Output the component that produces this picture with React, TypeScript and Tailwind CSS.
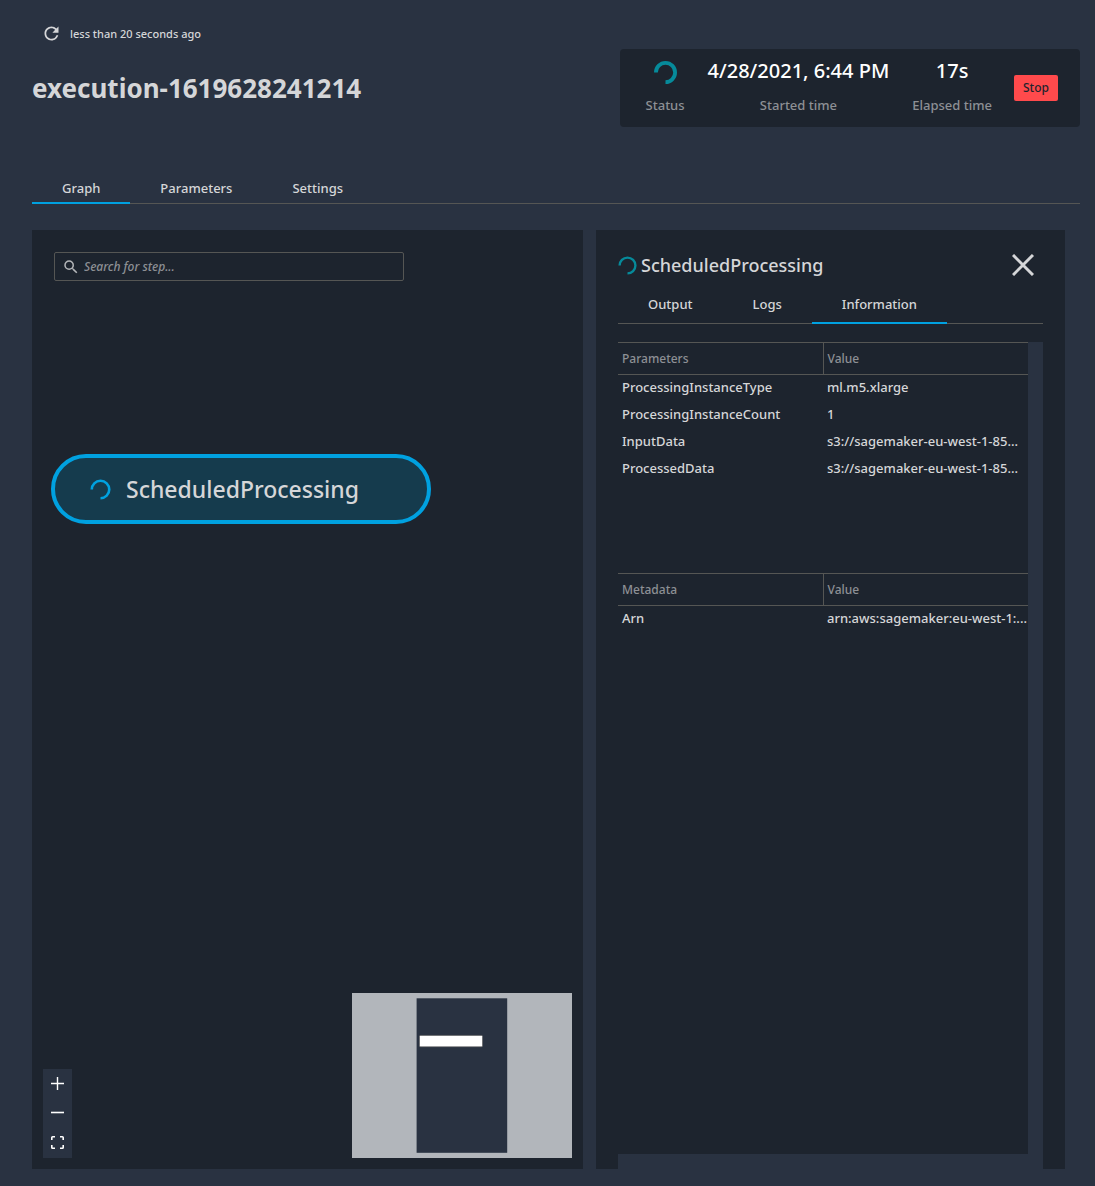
import { useState } from "react";
import { MdRefresh, MdSearch } from "react-icons/md";

function Spinner({ className, width }: { className: string; width: number }) {
  return (
    <svg viewBox="0 0 24 24" fill="none" stroke="currentColor" strokeWidth={width} className={className} aria-hidden="true">
      <path d="M2 12a10 10 0 1 1 10 10" />
    </svg>
  );
}

function Tabs({ items, initial, label, className }: { items: string[]; initial: string; label: string; className: string }) {
  const [active, setActive] = useState(initial);
  return (
    <div role="tablist" aria-label={label} className={"flex border-b border-[#555654] " + className}>
      {items.map((item) => (
        <button
          key={item}
          role="tab"
          aria-selected={item === active}
          onClick={() => setActive(item)}
          className={
            "-mb-px border-b-2 px-[30px] text-[13px] font-medium leading-5 " +
            (item === active ? "border-[#00a1e0]" : "border-transparent")
          }
        >
          {item}
        </button>
      ))}
    </div>
  );
}

function DataTable({ name, rows, className }: { name: string; rows: [string, string][]; className: string }) {
  return (
    <div className={className}>
      <table className="w-full table-fixed border-collapse text-left text-[13px] leading-5">
        <thead>
          <tr className="h-8 border-y border-[#555654] text-xs text-[#8d9095]">
            <th className="border-r border-[#555654] px-1 font-medium">{name}</th>
            <th className="px-1 font-medium">Value</th>
          </tr>
        </thead>
        <tbody className="font-medium">
          {rows.map(([key, value]) => (
            <tr key={key}>
              <td className="whitespace-nowrap px-1 pb-[5px] pt-0.5">{key}</td>
              <td className="whitespace-nowrap px-1 pb-[5px] pt-0.5">{value}</td>
            </tr>
          ))}
        </tbody>
      </table>
    </div>
  );
}

function Stat({ label, children }: { label: string; children: React.ReactNode }) {
  return (
    <div className="flex flex-col items-center gap-2.5">
      <div className="flex h-7 items-center text-xl font-medium text-white">{children}</div>
      <div className="text-[13px] font-medium leading-5 text-[#8d9095]">{label}</div>
    </div>
  );
}

export default function App() {
  return (
    <div className="flex min-h-screen flex-col bg-[#293241] pb-[17px] pl-8 pr-[15px] font-['Noto_Sans','Open_Sans',sans-serif] text-[#d5d6d8]">
      <header className="flex items-start justify-between">
        <div>
          <div className="flex items-center gap-2 pl-[9px] pt-[23px]">
            <button aria-label="Refresh">
              <MdRefresh className="size-[21px]" />
            </button>
            <span className="text-[11px] font-medium leading-5">less than 20 seconds ago</span>
          </div>
          <h1 className="mt-[26px] text-[26px] font-bold leading-9">execution-1619628241214</h1>
        </div>
        <section aria-label="Execution status" className="mt-[49px] flex h-[78px] items-center rounded-sm bg-[#1d242e] pl-[26px] pr-[22px]">
          <div className="flex items-center gap-[23px] pb-1">
            <Stat label="Status">
              <Spinner className="mt-0.5 size-[23px] text-[#068a9a]" width={4} />
            </Stat>
            <Stat label="Started time">4/28/2021, 6:44 PM</Stat>
            <Stat label="Elapsed time">17s</Stat>
          </div>
          <button className="ml-[22px] h-[26px] w-11 rounded-xs bg-[#ff4a4c] text-xs font-medium text-[#1d242e]">Stop</button>
        </section>
      </header>

      <Tabs items={["Graph", "Parameters", "Settings"]} initial="Graph" label="Execution views" className="mt-[46px] h-[31px]" />

      <main className="mr-[15px] mt-[26px] grid flex-1 grid-cols-[551fr_469fr] gap-[13px]">
        <section aria-label="Graph" className="relative bg-[#1d242e] p-[22px]">
          <label className="flex h-[29px] max-w-[350px] items-center gap-1 rounded-xs border border-[#555654] px-[7px]">
            <MdSearch className="size-[18px] text-[#b4b6b9]" />
            <input
              type="text"
              aria-label="Search for step"
              placeholder="Search for step..."
              className="min-w-0 flex-1 bg-transparent text-xs font-medium italic outline-none placeholder:text-[#8d9095]"
            />
          </label>

          <button className="absolute left-[19px] top-[224px] flex h-[70px] w-[380px] items-center gap-[15px] rounded-full border-4 border-[#00a1e0] bg-[#153b4d] pl-[35px] text-[23px] font-medium">
            <Spinner className="size-[21px] text-[#00a1e0]" width={3} />
            ScheduledProcessing
          </button>

          <div className="absolute bottom-[11px] left-[11px] flex flex-col bg-[#293241] text-white">
            <button aria-label="Zoom in" className="flex h-[29px] w-[29px] items-center justify-center">
              <svg viewBox="0 0 13 13" className="size-[13px]" stroke="currentColor" strokeWidth="1.4"><path d="M6.5 0v13M0 6.5h13" /></svg>
            </button>
            <button aria-label="Zoom out" className="flex h-[29px] w-[29px] items-center justify-center">
              <svg viewBox="0 0 13 13" className="size-[13px]" stroke="currentColor" strokeWidth="1.6"><path d="M0 6.5h13" /></svg>
            </button>
            <button aria-label="Fit view" className="flex h-[31px] w-[29px] items-center justify-center">
              <svg viewBox="0 0 13 13" className="size-[13px]" fill="none" stroke="currentColor" strokeWidth="1.6">
                <path d="M.8 4V1.6q0-.8.8-.8H4M9 .8h2.4q.8 0 .8.8V4M12.2 9v2.4q0 .8-.8.8H9M4 12.2H1.6q-.8 0-.8-.8V9" />
              </svg>
            </button>
          </div>

          <svg viewBox="0 0 220 165" role="img" aria-label="Minimap" className="absolute bottom-[11px] right-[11px] w-[220px]">
            <rect width="220" height="165" fill="#b2b6bb" />
            <rect x="64.6" y="5.3" width="90.6" height="154.5" fill="#293241" />
            <rect x="67.5" y="42.4" width="63" height="11.4" rx="1" fill="#fff" stroke="#555" strokeWidth=".6" />
          </svg>
        </section>

        <section aria-label="Step details" className="flex min-w-0 flex-col bg-[#1d242e] px-[22px] pt-5">
          <div className="flex h-[30px] items-center">
            <Spinner className="mr-1 size-[19px] text-[#068a9a]" width={3} />
            <h2 className="flex-1 text-lg font-medium">ScheduledProcessing</h2>
            <button aria-label="Close" className="mr-[9px]">
              <svg viewBox="0 0 22 22" className="size-[22px]" stroke="currentColor" strokeWidth="3"><path d="M1 1l20 20M21 1L1 21" /></svg>
            </button>
          </div>
          <Tabs items={["Output", "Logs", "Information"]} initial="Information" label="Step views" className="mt-1.5 h-[38px]" />
          <div className="mt-[18px] flex flex-1 flex-col bg-[#293241] pb-[15px] pr-[15px]">
            <div className="flex-1 bg-[#1d242e]">
              <DataTable
                name="Parameters"
                className="min-h-[231px]"
                rows={[
                  ["ProcessingInstanceType", "ml.m5.xlarge"],
                  ["ProcessingInstanceCount", "1"],
                  ["InputData", "s3://sagemaker-eu-west-1-85..."],
                  ["ProcessedData", "s3://sagemaker-eu-west-1-85..."],
                ]}
              />
              <DataTable name="Metadata" className="" rows={[["Arn", "arn:aws:sagemaker:eu-west-1:..."]]} />
            </div>
          </div>
        </section>
      </main>
    </div>
  );
}
